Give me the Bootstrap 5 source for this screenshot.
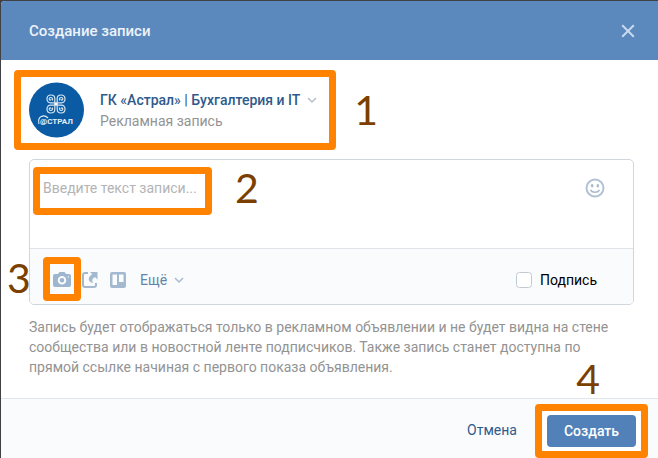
<!DOCTYPE html>
<html lang="ru">
<head>
<meta charset="utf-8">
<meta name="viewport" content="width=device-width, initial-scale=1">
<title>Создание записи</title>
<link href="https://cdn.jsdelivr.net/npm/bootstrap@5.3.0/dist/css/bootstrap.min.css" rel="stylesheet">
<style>
  body { font-family: Roboto, "Open Sans", sans-serif; font-size: 14px; line-height: 20px; background: #414145; color: #000; }
  svg { display: block; }
  .dialog-shell { padding: 1px 0 0 1px; min-height: 100vh; }
  .dialog-box { background: #fff; border-radius: 4px 0 0 0; overflow: hidden; flex: 1; }
  .dialog-head { background: #5b88bd; height: 59px; padding: 0 22px 0 28px; }
  .dialog-head h1 { font-size: 15px; line-height: 20px; font-weight: 500; color: #edf3fa; }
  .plain { background: none; border: 0; padding: 0; }
  .callout { border: 7px solid #ff8200; border-radius: 4px; }
  .over { position: absolute; pointer-events: none; }
  .num { font-family: Lato, "Open Sans", sans-serif; font-size: 41px; line-height: 32px; color: #7b3f00; }
  .author-row { padding: 10px 13px 9px; gap: 18px; }
  .author { padding: 5px 11px 5px 8px; gap: 16px; }
  .author-name { color: #2f5a8c; font-weight: 500; gap: 6px; line-height: 22px; }
  .muted { color: #939393; }
  .editor { margin: 0 24px 0 28px; border: 1px solid #cfd6de; border-radius: 5px; }
  .editor-text { height: 88px; padding: 18px 28px 8px 13px; }
  .editor-text textarea { resize: none; border: 0; outline: 0; padding: 0; background: none; line-height: 20px; }
  .editor-text textarea::placeholder { color: #b4b4b4; opacity: 1; }
  .editor-tools { height: 56px; background: #fafbfc; border-top: 1px solid #dfe4ea; padding: 6px 36px 0 22px; border-radius: 0 0 4px 4px; gap: 10px; }
  .tool-link { margin-left: -1px; }
  .more { color: #6185aa; gap: 7px; margin-left: 3px; }
  .check { width: 16px; height: 16px; margin: 0; border: 1px solid #c1c9d1; border-radius: 3px; }
  .hint { margin: 0; padding: 12px 36px 21px 28px; }
  .dialog-foot { background: #fafbfc; border-top: 1px solid #e2e6eb; padding: 5px 10px 1px; flex: 1; align-items: flex-start; gap: 18px; }
  .cancel { color: #2f5a8c; line-height: 52px; }
  .submit-frame { padding: 4px 5px; background: #fff; }
  .btn-create { background: #5181b8; color: #fff; font-size: 14px; font-weight: 500; line-height: 20px; padding: 6px 17px; border: 0; border-radius: 4px; }
  .frame-text { left: 3px; top: 7px; width: 179px; height: 48px; }
  .frame-photo { left: -9px; top: -14px; width: 38px; height: 44px; }
  .num-2 { left: 205px; top: 12px; }
  .num-3 { left: -45px; top: -9px; }
  .num-4 { right: 58px; bottom: 100%; margin-bottom: 4px; }
</style>
<script src="https://cdn.jsdelivr.net/npm/bootstrap@5.3.0/dist/js/bootstrap.bundle.min.js"></script>
</head>
<body>
<div class="dialog-shell d-flex">
  <main class="dialog-box d-flex flex-column">
    <header class="dialog-head d-flex align-items-center justify-content-between">
      <h1 class="m-0">Создание записи</h1>
      <button type="button" class="plain" aria-label="Закрыть">
        <svg width="16" height="16" viewBox="0 0 16 16" fill="none" stroke="#c9daee" stroke-width="2"><path d="M2.2 2.2 13.8 13.8M13.8 2.2 2.2 13.8"/></svg>
      </button>
    </header>

    <section class="author-row d-flex align-items-center">
      <button type="button" class="plain callout author d-flex align-items-center text-start">
        <svg width="55" height="56" viewBox="0 0 55 56" role="img" aria-label="Астрал">
          <defs>
            <path id="curl" d="M-1.200 -1.200V-5.500C-1.200 -8 -2.500 -9 -5 -9C-8 -9 -9 -7.500 -9 -5C-9 -2.500 -7.500 -1.200 -5.500 -1.200H-1.200M-3.500 -3.500V-5C-3.500 -7 -6.800 -7 -6.800 -5C-6.800 -3.500 -5 -3.500 -5 -4.800"/>
          </defs>
          <circle cx="27.500" cy="28" r="27.500" fill="#0a5ba3"/>
          <g fill="none" stroke="#d5e5f2" stroke-width="1.200" transform="translate(27 22)">
            <use href="#curl"/><use href="#curl" transform="scale(-1 1)"/><use href="#curl" transform="scale(1 -1)"/><use href="#curl" transform="scale(-1 -1)"/>
          </g>
          <circle cx="27" cy="22" r="1.800" fill="#fff"/>
          <path d="M10 42c-2-8 5-10 9-6" fill="none" stroke="#e5eff8" stroke-width="1.100"/>
          <text x="11" y="42" font-family="Roboto, sans-serif" font-size="8" font-weight="700" fill="#e5eff8">@СТРАЛ</text>
        </svg>
        <span class="d-flex flex-column">
          <span class="author-name d-flex align-items-center">ГК «Астрал» | Бухгалтерия и IT
            <svg width="12" height="8" viewBox="0 0 12 8" fill="none" stroke="#b6bec8" stroke-width="1.500"><path d="m2 2 4 4 4-4"/></svg>
          </span>
          <span class="muted">Рекламная запись</span>
        </span>
      </button>
      <span class="num">1</span>
    </section>

    <section class="editor">
      <div class="editor-text position-relative d-flex align-items-start">
        <textarea class="flex-grow-1 h-100" aria-label="Текст записи" placeholder="Введите текст записи..."></textarea>
        <button type="button" class="plain" aria-label="Эмодзи">
          <svg width="20" height="20" viewBox="0 0 20 20"><circle cx="10" cy="10" r="8.500" fill="none" stroke="#b3c2d4" stroke-width="2"/><ellipse cx="7.200" cy="7.800" rx="1.300" ry="1.700" fill="#a9bacd"/><ellipse cx="12.800" cy="7.800" rx="1.300" ry="1.700" fill="#a9bacd"/><path d="M5.500 12c2 3 7 3 9 0" fill="none" stroke="#a9bacd" stroke-width="1.600"/></svg>
        </button>
        <span class="over callout frame-text"></span>
        <span class="over num num-2">2</span>
      </div>
      <div class="editor-tools d-flex align-items-center">
        <button type="button" class="plain position-relative" aria-label="Фотография">
          <svg width="20" height="18" viewBox="0 0 20 18"><path fill="#9db5ce" fill-rule="evenodd" d="M3 3h3l1.500-2h5L14 3h3q2 0 2 2v9q0 2-2 2H3q-2 0-2-2V5q0-2 2-2Zm7 2a4.300 4.300 0 1 0 0 8.600A4.300 4.300 0 0 0 10 5Zm0 2a2.300 2.300 0 1 1 0 4.600A2.300 2.300 0 0 1 10 7Zm6.300-1.700a.7.7 0 1 0 0 1.400.7.7 0 0 0 0-1.400Z"/></svg>
          <span class="over callout frame-photo"></span>
          <span class="over num num-3">3</span>
        </button>
        <button type="button" class="plain tool-link" aria-label="Ссылка">
          <svg width="18" height="18" viewBox="0 0 18 18"><path d="M7 2H4Q2 2 2 4v10q0 2 2 2h9q2 0 2-2v-2" fill="none" stroke="#a3b9d0" stroke-width="2"/><path d="M9 1h7.500v7.500l-2.300-2.300C11.500 7 10.500 9 12 12 6.500 11 6.500 6 11.300 3.300Z" fill="#a3b9d0"/></svg>
        </button>
        <button type="button" class="plain" aria-label="Карточки">
          <svg width="18" height="18" viewBox="0 0 18 18"><path fill="#a3b9d0" fill-rule="evenodd" d="M3 1h12q2 0 2 2v12q0 2-2 2H3q-2 0-2-2V3q0-2 2-2Zm.5 2.500v10.500H8V3.500Zm6.500 0V11h4.500V3.500Z"/></svg>
        </button>
        <button type="button" class="plain more d-flex align-items-center">Ещё
          <svg width="10" height="8" viewBox="0 0 10 8" fill="none" stroke="#a9bacd" stroke-width="1.500"><path d="m1 2 4 4 4-4"/></svg>
        </button>
        <label class="ms-auto d-flex align-items-center gap-2" for="signature"><input class="form-check-input check" type="checkbox" id="signature">Подпись</label>
      </div>
    </section>

    <p class="hint muted">Запись будет отображаться только в рекламном объявлении и не будет видна на стене сообщества или в новостной ленте подписчиков. Также запись станет доступна по прямой ссылке начиная с первого показа объявления.</p>

    <footer class="dialog-foot d-flex justify-content-end position-relative">
      <button type="button" class="plain cancel">Отмена</button>
      <div class="callout submit-frame"><button type="button" class="btn btn-create">Создать</button></div>
      <span class="over num num-4">4</span>
    </footer>
  </main>
</div>
</body>
</html>
